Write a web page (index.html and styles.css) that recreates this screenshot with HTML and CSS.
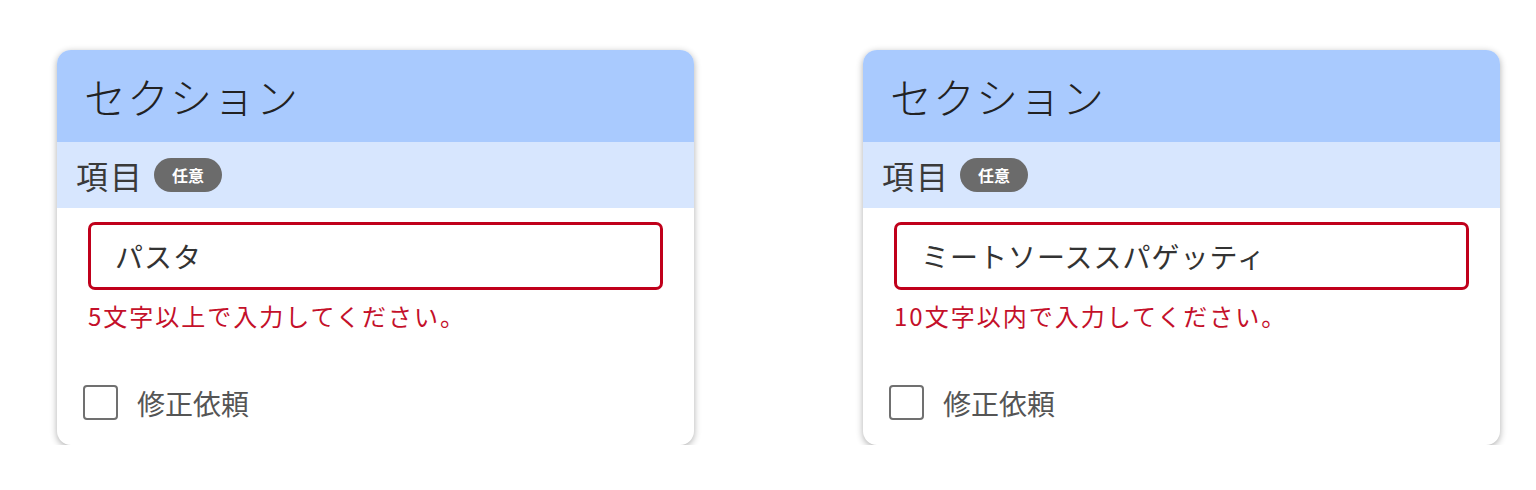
FILE: index.html
```html
<!DOCTYPE html>
<html lang="ja">
<head>
<meta charset="utf-8">
<title>セクション</title>
<link rel="stylesheet" href="styles.css">
</head>
<body>
<main class="page">
  <section class="card">
    <div class="card-header">セクション</div>
    <div class="card-sub">
      <span class="sub-label">項目</span>
      <span class="badge">任意</span>
    </div>
    <div class="field">
      <div class="input">パスタ</div>
      <div class="error">5文字以上で入力してください。</div>
    </div>
    <label class="check">
      <span class="box"></span>
      <span class="check-label">修正依頼</span>
    </label>
  </section>
  <section class="card">
    <div class="card-header">セクション</div>
    <div class="card-sub">
      <span class="sub-label">項目</span>
      <span class="badge">任意</span>
    </div>
    <div class="field">
      <div class="input">ミートソーススパゲッティ</div>
      <div class="error">10文字以内で入力してください。</div>
    </div>
    <label class="check">
      <span class="box"></span>
      <span class="check-label">修正依頼</span>
    </label>
  </section>
</main>
</body>
</html>
```
FILE: styles.css
```css
html, body {
  margin: 0;
  padding: 0;
  background: #ffffff;
}
body {
  font-family: "Noto Sans CJK JP", "Noto Sans", sans-serif;
  color: #333;
}
.page {
  display: flex;
  gap: 169px;
  padding: 50px 0 0 57px;
}
.card {
  width: 637px;
  height: 395px;
  border-radius: 14px;
  background: #fff;
  box-shadow: 0 2px 7px rgba(0, 0, 0, 0.32);
  overflow: hidden;
  display: flex;
  flex-direction: column;
}
.card-header {
  height: 92px;
  background: #a9cafe;
  display: flex;
  align-items: center;
  padding-left: 27px;
  font-size: 42px;
  font-weight: 300;
  line-height: 1;
  color: #222;
  letter-spacing: 1px;
}
.card-sub {
  height: 66px;
  background: #d7e6fe;
  display: flex;
  align-items: center;
  padding-left: 19px;
  gap: 10px;
}
.sub-label {
  font-size: 32px;
  line-height: 1;
  color: #3a3a3a;
  letter-spacing: 2px;
}
.badge {
  width: 68px;
  height: 34px;
  border-radius: 17px;
  background: #6b6b6b;
  color: #fff;
  font-size: 16px;
  font-weight: 700;
  display: flex;
  align-items: center;
  justify-content: center;
}
.field {
  padding: 14px 31px 0;
}
.input {
  height: 68px;
  box-sizing: border-box;
  border: 3px solid #c0001b;
  border-radius: 7px;
  padding-left: 24px;
  display: flex;
  align-items: center;
  font-size: 28px;
  letter-spacing: 1px;
  color: #333;
}
.error {
  margin-top: 8px;
  font-size: 24px;
  line-height: 36px;
  letter-spacing: 2px;
  color: #c4102a;
}
.check {
  display: flex;
  align-items: center;
  gap: 19px;
  padding-left: 26px;
  margin-top: 51px;
}
.box {
  width: 35px;
  height: 35px;
  box-sizing: border-box;
  border: 2px solid #707070;
  border-radius: 4px;
  background: #fff;
}
.check-label {
  font-size: 28px;
  line-height: 1;
  color: #555;
}
```
